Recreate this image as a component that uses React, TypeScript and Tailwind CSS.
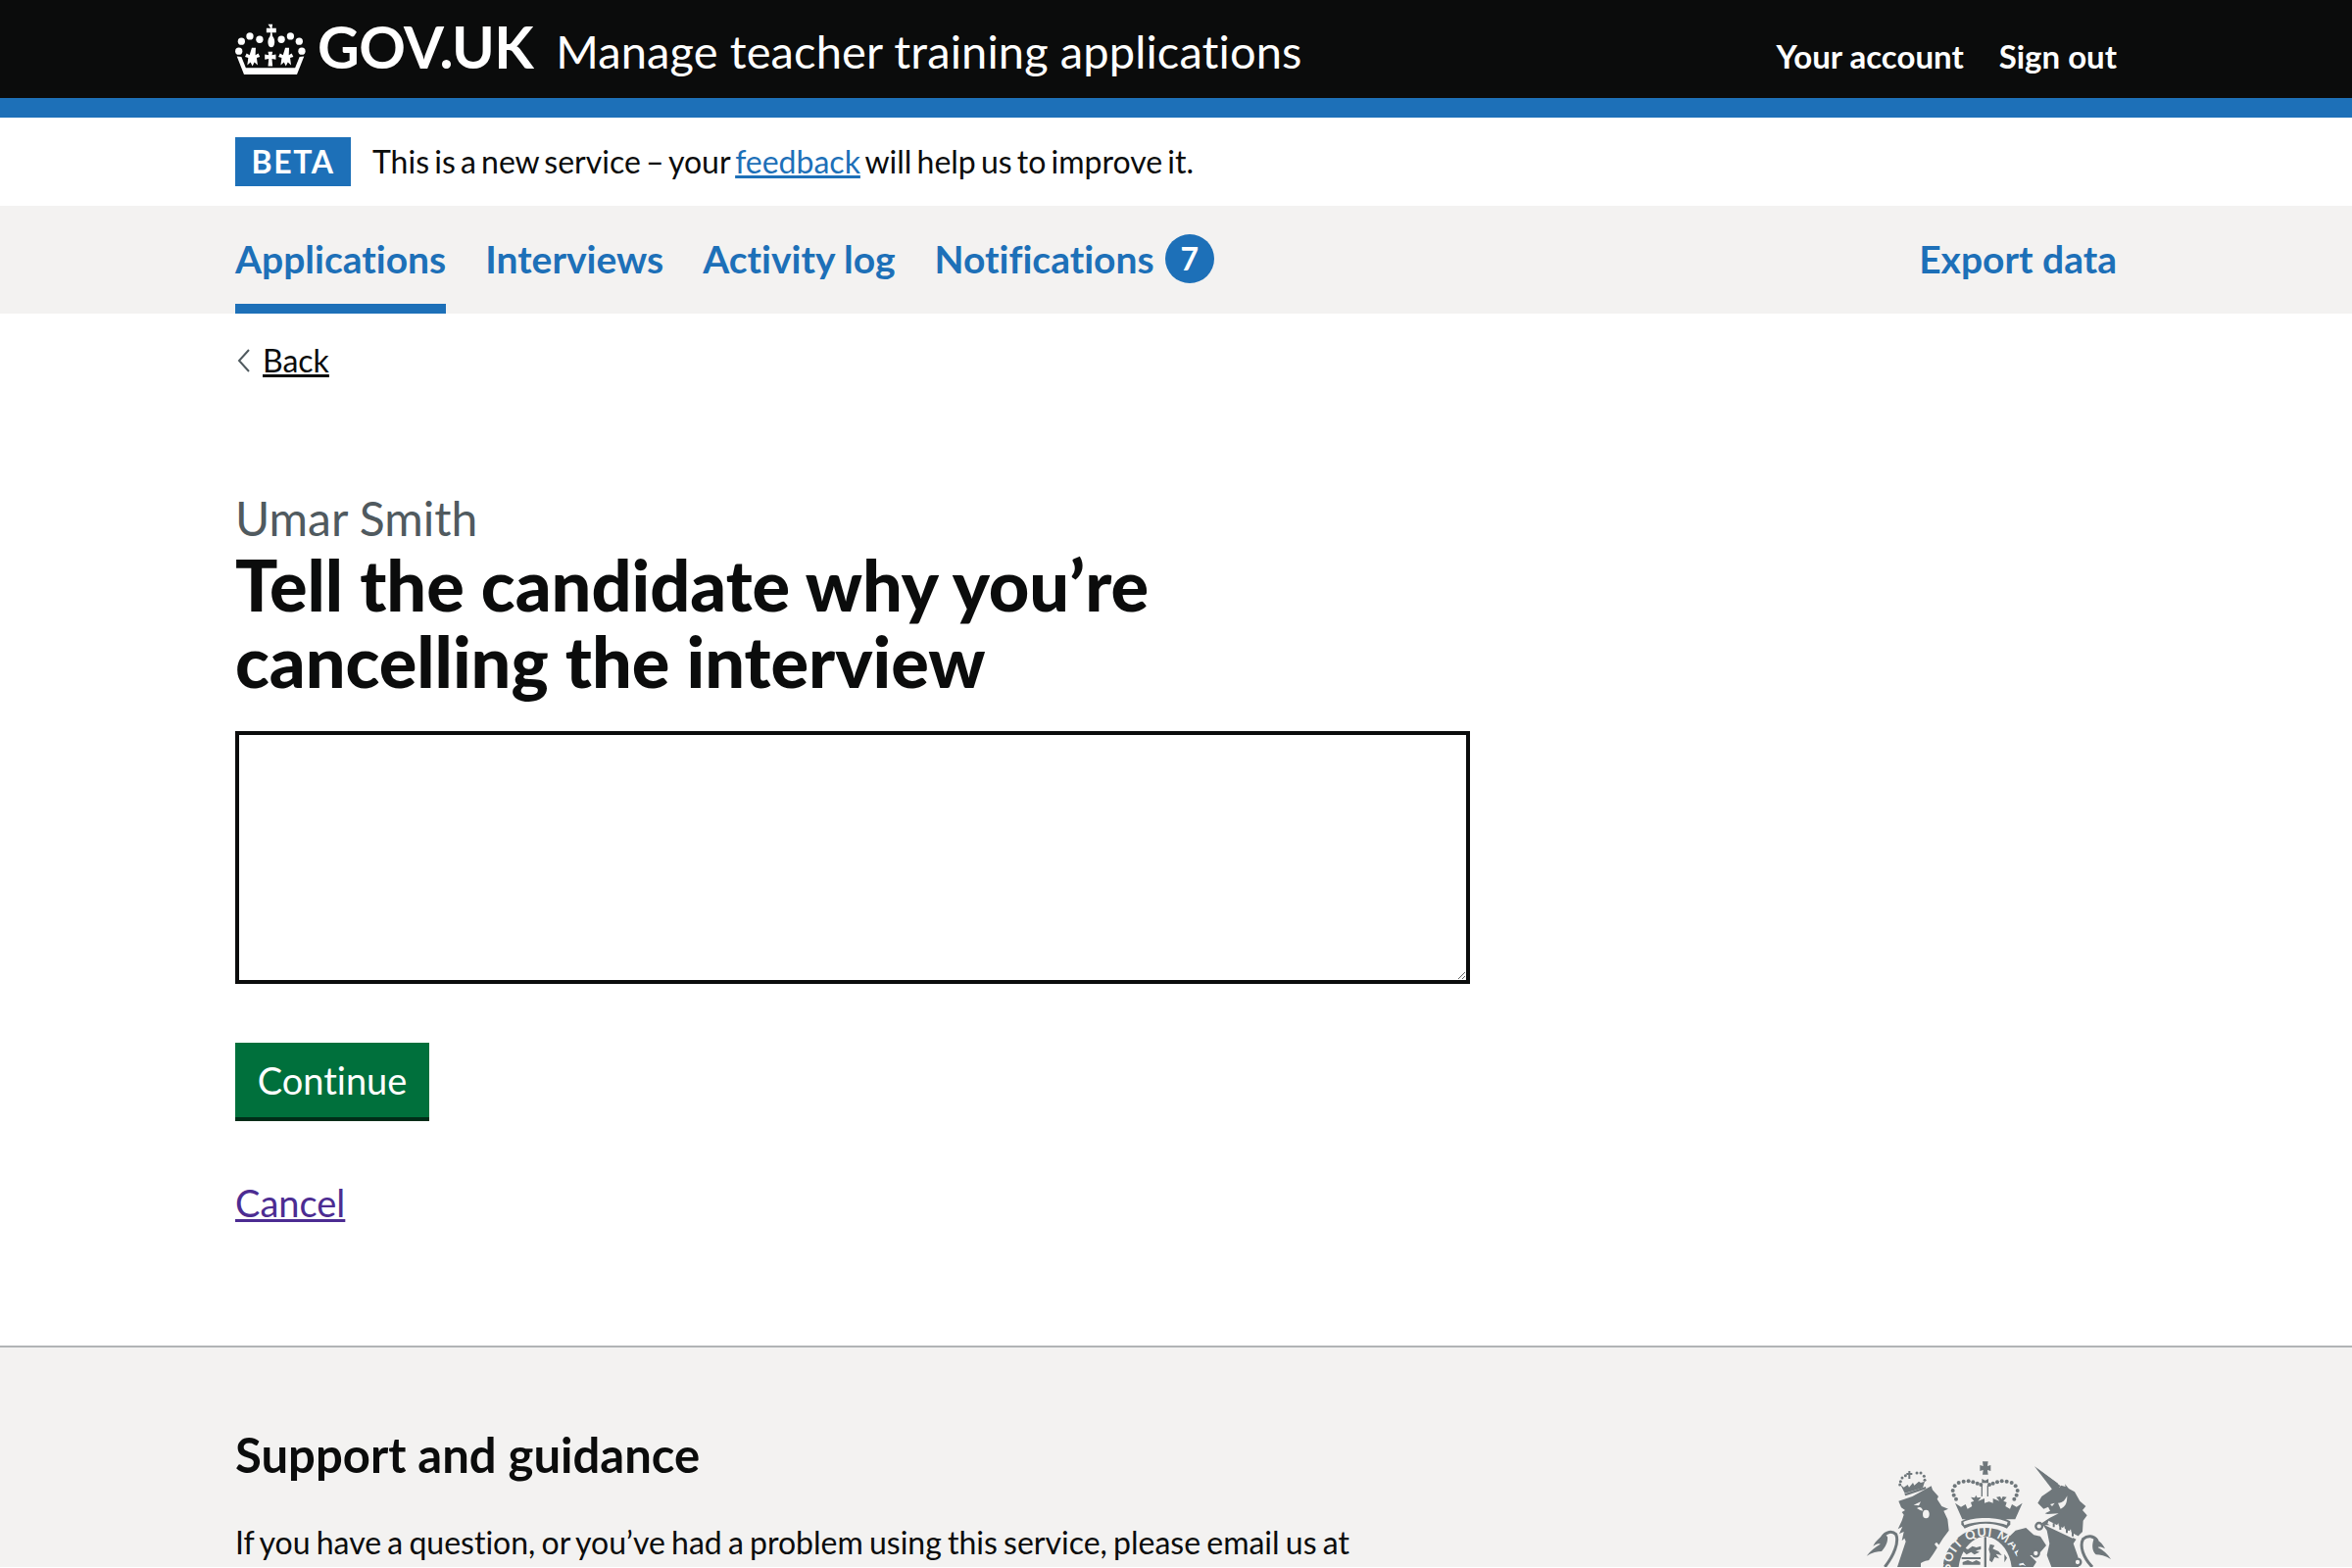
const sans = "font-['Lato','Liberation_Sans',sans-serif]";

function Crown() {
  return (
    <svg viewBox="45 33 217 160" className="w-[72px] h-[53px] shrink-0" fill="#fff">
      <circle cx="64" cy="88" r="11" />
      <circle cx="90" cy="72" r="11" />
      <circle cx="120" cy="82" r="11" />
      <circle cx="187" cy="82" r="11" />
      <circle cx="215" cy="72" r="11" />
      <circle cx="242" cy="88" r="11" />
      <circle cx="56" cy="118" r="11" />
      <circle cx="250" cy="118" r="11" />
      <path d="M146 35h14l-2 12h13v14h-13l2 11c8 9 8 24 2 32-3 3-9 3-12 0-6-8-6-23 2-32l2-11h-13V47h13z" />
      <path d="M96 108h12l-1 22 9-5 5 11-10 3 3 22-10-9-6 12-6-12-10 9 3-22-10-3 5-11 9 5z" />
      <path d="M199 108h12l-1 22 9-5 5 11-10 3 3 22-10-9-6 12-6-12-10 9 3-22-10-3 5-11 9 5z" />
      <path d="M146 120h14l-2 10 12-2v16l-12-2 2 22h-14l2-22-12 2v-16l12 2z" />
      <path d="M50 134l14 2 14 34h151l14-34 14-2-22 56H72z" />
      <path d="M75 170h157l-3 6H78z" />
    </svg>
  );
}

function Arms() {
  return (
    <svg viewBox="72 30 750 330" className="w-[250px] h-[110px]" fill="#6f777b">
      {/* small crown over the lion */}
      <g>
        <circle cx="178" cy="98" r="4.500" /><circle cx="176" cy="108" r="4.500" /><circle cx="183" cy="87" r="4.500" />
        <circle cx="193" cy="80" r="4.500" /><circle cx="228" cy="72" r="4.500" /><circle cx="240" cy="72" r="4.500" />
        <circle cx="250" cy="82" r="4.500" /><circle cx="252" cy="94" r="4.500" />
        <path d="M202 66h6v6h6v6h-6v12h-6V78h-6v-6h6z" />
        <path d="M178 108l10 8 12-8 4 8 12-14 4 8 14-12 6 4 12-4-6 20-55 16z" />
        <path d="M190 136l65-22 1 7-63 21z" />
      </g>
      {/* lion */}
      <path d="M172 158l42-14 58-32 4 12 18 20-4 8 14 22 20 8-14 6 12 26 4 34-18 24-30 48-28 40H168l26-78-4-10-8 8 6-28-14 6 10-22-14 8 12-26 6-18-6-8 10-6-12-8z" />
      <path d="M218 170l22-10-6 12zM228 180c10-6 16-2 18 8l-8-2z" fill="#f3f2f1" />
      <ellipse cx="256" cy="198" rx="10" ry="13" fill="#f3f2f1" />
      <path d="M288 284l52 56-10 8-48-58zM240 348c20-14 50-12 70 6l-2 6h-68z" fill="#f3f2f1" />
      {/* lion tail */}
      <path d="M130 360c28-36 44-76 34-100-12-12-30-8-42 8" fill="none" stroke="#6f777b" strokeWidth="9" />
      <path d="M128 256c-10 14-24 20-34 40 12-8 20-8 22-6-14 8-30 20-42 36 16-10 34-14 46-14 12-12 20-30 18-44z" />
      {/* top crown */}
      <path d="M429 37h17l-2 14 10-3v18l-10-3 2 14h-17l2-14-10 3V48l10 3z" />
      <path d="M427 90l10 5 10-5v13h-20zM425 110h4v34h-4zM443 110h4v34h-4z" />
      {[[341,140],[338,126],[344,112],[356,102],[371,98],[386,97],[400,100],[413,104],[424,108],[450,108],[461,104],[474,100],[488,97],[503,98],[518,102],[530,112],[536,126],[533,140],[526,152],[348,152]].map(([x, y]) => (
        <circle key={x * 1000 + y} cx={x} cy={y} r="6" />
      ))}
      <path d="M345 164l18 12 14-8 6 14 14-8-4-12 10-4-10-12 12 2 4-8 4 8 12-2-10 12 20-8v14l14-4 12 4v-14l20 8-10-12 12-2 4 8 4-8 12 2-10 12 10 4-4 12 14 8 6-14 14 8 18-12-22 50H367z" />
      <path d="M364 220c40-22 110-22 150 0v10c-4 4-8 8-10 12-40-20-90-20-130 0-2-4-6-8-10-12z" />
      <path d="M370 222c34-16 100-16 136 0l-3 10c-36-14-94-14-130 0z" fill="#f3f2f1" />
      {/* shield and motto */}
      <circle cx="437" cy="370" r="130" fill="#6f777b" />
      <circle cx="437" cy="370" r="137" fill="none" stroke="#f3f2f1" strokeWidth="7" />
      <path id="motto" d="M331 372a106 106 0 0 1 212 0" fill="none" />
      <text fontSize="38" fontWeight="700" fill="#f3f2f1" fontFamily="Lato, sans-serif" letterSpacing="3">
        <textPath href="#motto" startOffset="0">SOIT QUI MAL Y</textPath>
      </text>
      <path d="M355 372c2-60 40-104 82-106 42 2 80 46 82 106z" fill="#f3f2f1" />
      <path d="M434 268h7v92h-7z" />
      <path d="M372 300l12 6 14-10 12 4 14-4v10l-16 4 12 4-16 8-10-8-14 8-10-10zM365 330h58v6h-58zM368 345l16-6 14 6 12-6 12 6v8h-54zM452 290l14 4-6 10 18 8 10 12-18-4 10 14-14-4-8 16-8-6 2-20-4-14zM496 320l8 12-8 14z" />
      {/* unicorn */}
      <path d="M588 52l80 60-20 18z" />
      <path d="M588 52l77 64 4-6 14 4-2-8 12 14 18 10 16 28 18 16-10 12 14 16-12 16-2 34-10 10-18 26 14 40 2 32H640l-14-36 8-36-8-40-16-22 24-16 28-14-34 2-8-2 16-8-6-12-14 6-18-18 12-20 26-18 24-22z" />
      <path d="M636 168l14-4-8 10zM660 164c16 0 22-10 28-22 0 24-6 34-20 40z" fill="#f3f2f1" />
      <path d="M628 228l3-10 96 50-6 10z" fill="#f3f2f1" />
      <path d="M627 232l12 0 4-8 4 10 10-2 4-6 2 10 12 4 4-6 2 10 14 6 4-6 2 10 12 8-8 10-86-40z" fill="#f3f2f1" />
      <path d="M644 226h6v12h-6zM664 234h6v12h-6zM684 244h6v12h-6zM702 254h6v12h-6z" />
      {/* chain and foreleg */}
      <path d="M530 248l32-8 24 22 20 4 18 28-26 30-24 0 20 20-10 16h-20l-30-36 6-22-18-20-12-14z" />
      <circle cx="602" cy="235" r="10" fill="none" stroke="#6f777b" strokeWidth="7" />
      <circle cx="592" cy="318" r="10" fill="#f3f2f1" stroke="#6f777b" strokeWidth="7" />
      <circle cx="720" cy="345" r="10" fill="#f3f2f1" stroke="#6f777b" strokeWidth="7" />
      {/* unicorn tail */}
      <path d="M765 360c-28-30-40-64-28-86 14-12 32-10 44 6" fill="none" stroke="#6f777b" strokeWidth="9" />
      <path d="M772 268c10 12 24 18 32 36-10-6-18-6-22-4 16 8 30 20 40 36-16-10-34-14-46-14-12-12-14-30-4-54z" />
    </svg>
  );
}

export default function App() {
  return (
    <div className={`${sans} [font-variant-ligatures:none] text-[#0b0c0c] bg-white min-h-screen`}>
      <header className="bg-[#0b0c0c] h-[100px]">
        <div className="max-w-[1920px] mx-auto flex items-center h-full">
          <Crown />
          <span className="ml-3 text-[59px] font-bold text-white tracking-[-0.5px] -mt-1">GOV.UK</span>
          <span className="ml-[23px] text-[47px] text-white mt-1 tracking-[0.12px]">Manage teacher training applications</span>
          <nav className="ml-auto flex gap-9 text-[33px] font-bold text-white mt-4">
            <span>Your account</span>
            <span>Sign out</span>
          </nav>
        </div>
      </header>
      <div className="h-5 bg-[#1d70b8]" />

      <div className="max-w-[1920px] mx-auto flex items-center h-[90px]">
        <strong className="bg-[#1d70b8] text-white text-[32px] font-bold tracking-wider h-[50px] w-[118px] flex items-center justify-center">BETA</strong>
        <p className="ml-[22px] text-[32px] [word-spacing:-3px]">
          This is a new service – your <a href="#" className="text-[#1d70b8] underline">feedback</a> will help us to improve it.
        </p>
      </div>

      <div className="bg-[#f3f2f1] h-[110px]">
        <div className="max-w-[1920px] mx-auto h-full flex gap-10 text-[39px] font-bold text-[#1d70b8]">
          <a href="#" className="h-full flex items-center pt-[8px] border-b-[10px] border-[#1d70b8]">Applications</a>
          <a href="#" className="h-full flex items-center pt-[8px] border-b-[10px] border-transparent">Interviews</a>
          <a href="#" className="h-full flex items-center pt-[8px] border-b-[10px] border-transparent">Activity log</a>
          <a href="#" className="h-full flex items-center pt-[8px] border-b-[10px] border-transparent">
            Notifications
            <span className="ml-[11px] w-[50px] h-[50px] rounded-full bg-[#1d70b8] text-white text-[32px] font-bold flex items-center justify-center">7</span>
          </a>
          <a href="#" className="ml-auto h-full flex items-center pt-[8px] border-b-[10px] border-transparent">Export data</a>
        </div>
      </div>

      <main className="max-w-[1920px] mx-auto">
        <a href="#" className="mt-[24px] inline-flex items-center text-[32px] underline">
          <svg viewBox="0 0 14 24" className="ml-[2px] w-[14px] h-[24px] mr-[12px]" fill="none" stroke="#505a5f" strokeWidth="2">
            <path d="M12 1L2 12l10 11" />
          </svg>
          Back
        </a>
        <div className="mt-[109px] text-[48px] text-[#505a5f] leading-[56px]">Umar Smith</div>
        <h1 className="text-[72px] font-black leading-[78px] w-[1260px]">
          Tell the candidate why you’re<br />cancelling the interview
        </h1>
        <textarea className="block mt-[33px] w-[1260px] h-[258px] border-4 border-[#0b0c0c]" />
        <button className="block mt-[60px] w-[198px] h-[80px] bg-[#00703c] border-b-4 border-[#002d18] text-white text-[38px]">Continue</button>
        <a href="#" className="block mt-[55px] w-fit text-[38px] text-[#4c2c92] underline">Cancel</a>
      </main>

      <footer className="mt-[117px] bg-[#f3f2f1] border-t-2 border-[#b1b4b6] h-[226px] overflow-hidden">
        <div className="max-w-[1920px] mx-auto flex justify-between">
          <div>
            <h2 className="mt-[81px] text-[49px] font-bold leading-[56px]">Support and guidance</h2>
            <p className="mt-[38px] text-[32px] [word-spacing:-2px]">If you have a question, or you’ve had a problem using this service, please email us at</p>
          </div>
          <div className="pt-[114px] pr-[6px] shrink-0"><Arms /></div>
        </div>
      </footer>
    </div>
  );
}
